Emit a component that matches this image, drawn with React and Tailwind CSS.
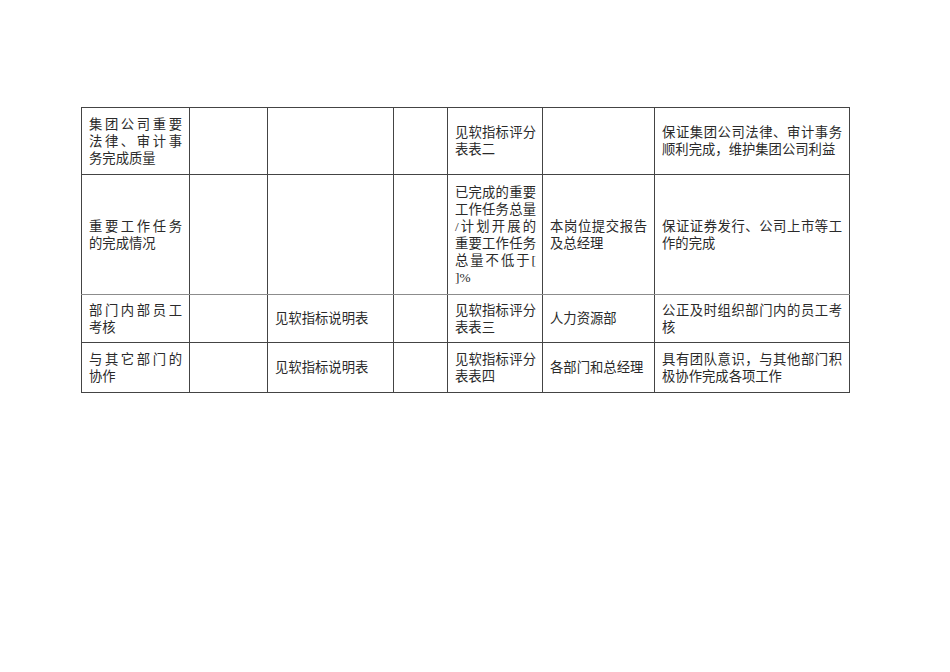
import React from 'react';

const rows = [
  {
    h: 'h-[67px]',
    cells: [
      '集团公司重要法律、审计事务完成质量',
      '',
      '',
      '',
      '见软指标评分表表二',
      '',
      '保证集团公司法律、审计事务顺利完成，维护集团公司利益',
    ],
  },
  {
    h: 'h-[120px]',
    cells: [
      '重要工作任务的完成情况',
      '',
      '',
      '',
      // zero-width spaces let "/" open a line and "[" close one, as in the original
      '已完成的重要工作任务总量\u200B/计划开展的重要工作任务总量不低于[\u200B ]%',
      '本岗位提交报告及总经理',
      '保证证券发行、公司上市等工作的完成',
    ],
  },
  {
    h: 'h-[48px]',
    cells: [
      '部门内部员工考核',
      '',
      '见软指标说明表',
      '',
      '见软指标评分表表三',
      '人力资源部',
      '公正及时组织部门内的员工考核',
    ],
  },
  {
    h: 'h-[50px]',
    cells: [
      '与其它部门的协作',
      '',
      '见软指标说明表',
      '',
      '见软指标评分表表四',
      '各部门和总经理',
      '具有团队意识，与其他部门积极协作完成各项工作',
    ],
  },
];

const App = () => {
  return (
    <div
      className="min-h-[672px] w-[950px] bg-white pt-[107px] pl-[81px] text-[#2a2a2a]"
      style={{ fontFamily: '"Liberation Serif", "Noto Sans CJK SC", serif' }}
    >
      <table className="table-fixed border-collapse w-[768px] text-[13.33px] leading-[17px]">
        <colgroup>
          <col className="w-[108px]" />
          <col className="w-[78px]" />
          <col className="w-[126px]" />
          <col className="w-[54px]" />
          <col className="w-[95px]" />
          <col className="w-[112px]" />
          <col className="w-[195px]" />
        </colgroup>
        <tbody>
          {rows.map((row, i) => (
            <tr key={i} className={row.h}>
              {row.cells.map((text, j) => (
                <td
                  key={j}
                  className={
                    'border border-[#444] py-0 align-middle text-justify ' +
                    (j === 4 ? 'pl-[7px] pr-[6px] ' : 'px-[7px] ') +
                    (i === 1 ? 'border-b-[#8c8c8c]' : '')
                  }
                >
                  {text}
                </td>
              ))}
            </tr>
          ))}
        </tbody>
      </table>
    </div>
  );
};

export default App;
